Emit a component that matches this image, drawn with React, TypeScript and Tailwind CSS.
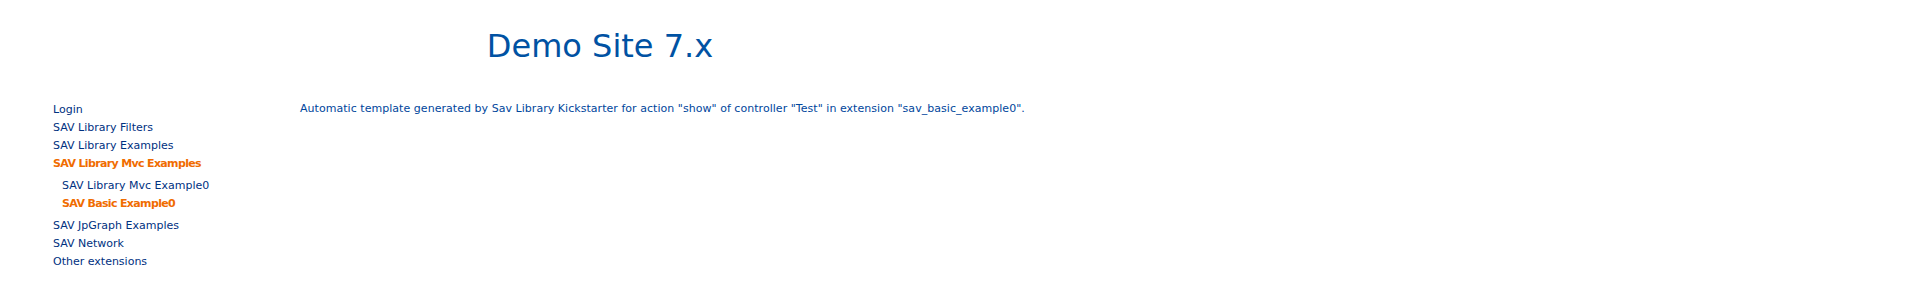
import React from "react";

const font = { fontFamily: '"DejaVu Sans", Verdana, sans-serif' };

interface NavItem {
  label: string;
  active?: boolean;
  children?: NavItem[];
}

const NAV: NavItem[] = [
  { label: "Login" },
  { label: "SAV Library Filters" },
  { label: "SAV Library Examples" },
  {
    label: "SAV Library Mvc Examples",
    active: true,
    children: [
      { label: "SAV Library Mvc Example0" },
      { label: "SAV Basic Example0", active: true },
    ],
  },
  { label: "SAV JpGraph Examples" },
  { label: "SAV Network" },
  { label: "Other extensions" },
];

const NavLink: React.FC<{ item: NavItem }> = ({ item }) => (
  <a
    href="#"
    className={`block leading-[18px] ${
      item.active
        ? "font-bold tracking-[-0.65px] text-[#f06c00]"
        : "text-[#00317f]"
    }`}
  >
    {item.label}
  </a>
);

export default function App() {
  return (
    <div className="w-[1200px] bg-white min-h-[285px]" style={font}>
      {/* HEADER */}
      <h1 className="pt-[26px] text-center text-[32px] leading-[40px] font-normal text-[#0052a3]">
        Demo Site 7.x
      </h1>

      <div className="flex mt-[33px]">
        {/* MENU */}
        <ul className="w-[300px] shrink-0 pl-[53px] pt-[2px] text-[11px]">
          {NAV.map((item) => (
            <li key={item.label}>
              <NavLink item={item} />
              {item.children && (
                <ul className="my-[4px] pl-[9px]">
                  {item.children.map((c) => (
                    <li key={c.label}>
                      <NavLink item={c} />
                    </li>
                  ))}
                </ul>
              )}
            </li>
          ))}
        </ul>

        {/* CONTENT */}
        <div className="pt-[1px] text-[11px] leading-[18px] tracking-[0.04px] text-[#00469c]">
          Automatic template generated by Sav Library Kickstarter for action
          "show" of controller "Test" in extension "sav_basic_example0".
        </div>
      </div>
    </div>
  );
}
